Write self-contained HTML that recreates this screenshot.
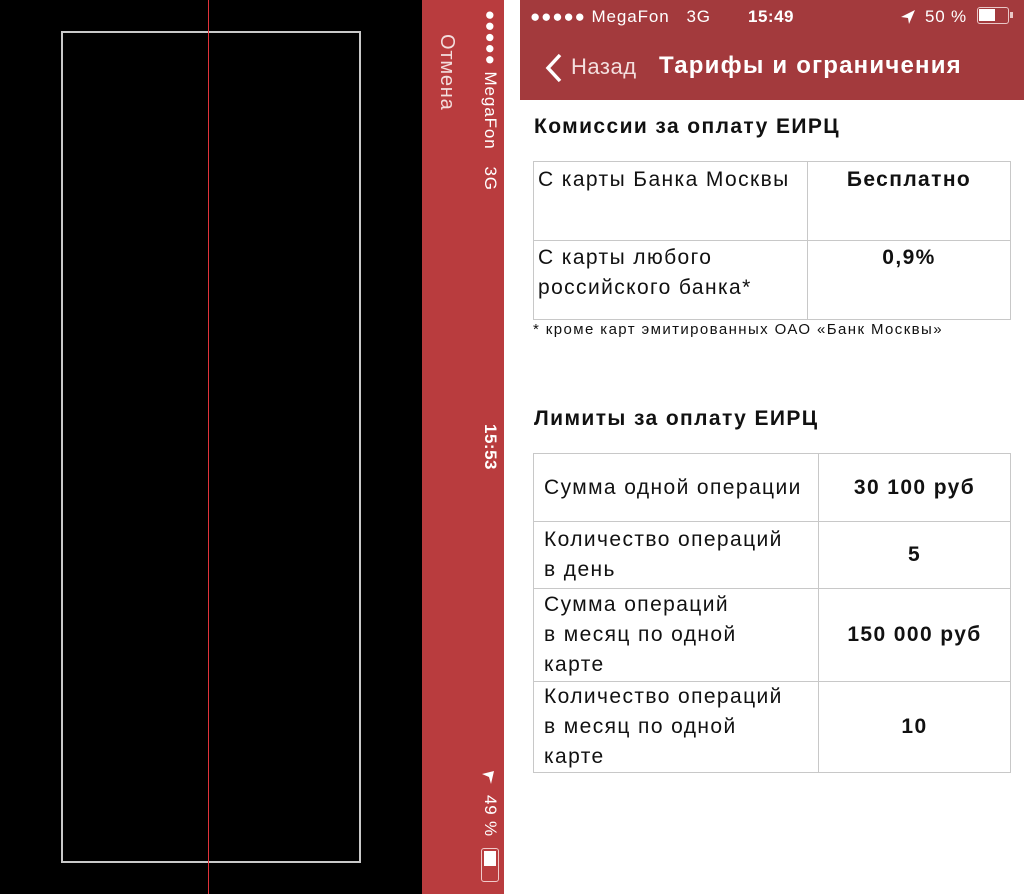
<!DOCTYPE html>
<html><head><meta charset="utf-8"><style>
*{margin:0;padding:0;box-sizing:border-box}
body{width:1024px;height:894px;position:relative;overflow:hidden;background:#fff;font-family:"Liberation Sans",sans-serif;color:#111;letter-spacing:1.4px}
.a{position:absolute}
.rot{position:absolute;transform-origin:0 0;transform:rotate(90deg);white-space:nowrap;color:#fff}
table{border-collapse:collapse;position:absolute;font-size:21px}
td{border:1px solid #c8c8c8;vertical-align:top;line-height:30px}
</style></head><body>
<div class="a" style="left:0;top:0;width:422px;height:894px;background:#000"></div>
<div class="a" style="left:61px;top:31px;width:300px;height:832px;border:2px solid #c9c9c9"></div>
<div class="a" style="left:208px;top:0;width:1px;height:894px;background:#e0333a"></div>
<div class="a" style="left:422px;top:0;width:82px;height:894px;background:#b93c3e"></div>
<div class="rot" style="left:500px;top:10px;font-size:17px;letter-spacing:0.9px">●●●●● MegaFon&nbsp;&nbsp;&nbsp;3G</div>
<div class="rot" style="left:458px;top:34px;font-size:20px;color:#f3dede;letter-spacing:0.8px">Отмена</div>
<div class="rot" style="left:500px;top:424px;font-size:17px;font-weight:bold;letter-spacing:0.5px">15:53</div>
<div class="rot" style="left:500px;top:795px;font-size:17px;letter-spacing:0.8px">49 %</div>
<svg class="a" style="left:480px;top:770px" width="16" height="16"><path d="M2 4 L14 1 L11 14 L9 7 Z" fill="#fff"/></svg>
<div class="a" style="left:481px;top:848px;width:18px;height:34px;border:1.5px solid #f0caca;border-radius:3px"><div style="height:15px;margin:2px;background:#fff"></div></div>

<div class="a" style="left:520px;top:0;width:504px;height:100px;background:#a33a3d"></div>
<div class="a" style="left:530px;top:7px;font-size:17px;color:#fff;letter-spacing:0.9px">●●●●● MegaFon&nbsp;&nbsp;&nbsp;3G</div>
<div class="a" style="left:748px;top:7px;font-size:17px;color:#fff;font-weight:bold;letter-spacing:0.5px">15:49</div>
<svg class="a" style="left:900px;top:9px" width="16" height="16"><path d="M1 8 L15 1 L9 15 L8 9 Z" fill="#fff"/></svg>
<div class="a" style="left:925px;top:7px;font-size:17px;color:#fff;letter-spacing:0.8px">50 %</div>
<div class="a" style="left:977px;top:7px;width:32px;height:17px;border:1.5px solid #e9c7c7;border-radius:3px"><div style="width:16px;height:12px;margin:1px;background:#fff"></div></div>
<div class="a" style="left:1010px;top:12px;width:3px;height:6px;background:#e9c7c7"></div>
<svg class="a" style="left:544px;top:52px" width="20" height="32"><path d="M16 3 L4 16 L16 29" stroke="#fff" stroke-width="3.5" fill="none"/></svg>
<div class="a" style="left:571px;top:54px;font-size:22px;color:#f3dede;letter-spacing:0.5px">Назад</div>
<div class="a" style="left:659px;top:52px;font-size:24px;color:#fff;font-weight:bold;letter-spacing:1.2px">Тарифы и ограничения</div>

<div class="a" style="left:534px;top:115px;font-size:21px;font-weight:bold">Комиссии за оплату ЕИРЦ</div>
<table style="left:533px;top:161px;width:478px">
<tr style="height:79px"><td style="width:274px;padding:3px 4px">С карты Банка Москвы</td><td style="text-align:center;font-weight:bold;padding:3px 4px">Бесплатно</td></tr>
<tr style="height:79px"><td style="padding:2px 4px">С карты любого<br>российского банка*</td><td style="text-align:center;font-weight:bold;padding:2px 4px">0,9%</td></tr>
</table>
<div class="a" style="left:533px;top:321px;font-size:15px">* кроме карт эмитированных ОАО «Банк Москвы»</div>

<div class="a" style="left:534px;top:407px;font-size:21px;font-weight:bold">Лимиты за оплату ЕИРЦ</div>
<table style="left:533px;top:453px;width:478px">
<tr style="height:68px"><td style="width:285px;padding:0 10px;vertical-align:middle">Сумма одной операции</td><td style="text-align:center;font-weight:bold;vertical-align:middle">30 100 руб</td></tr>
<tr style="height:67px"><td style="padding:0 10px;vertical-align:middle">Количество операций<br>в день</td><td style="text-align:center;font-weight:bold;vertical-align:middle">5</td></tr>
<tr style="height:93px"><td style="padding:0 10px;vertical-align:middle">Сумма операций<br>в месяц по одной<br>карте</td><td style="text-align:center;font-weight:bold;vertical-align:middle">150 000 руб</td></tr>
<tr style="height:91px"><td style="padding:0 10px;vertical-align:middle">Количество операций<br>в месяц по одной<br>карте</td><td style="text-align:center;font-weight:bold;vertical-align:middle">10</td></tr>
</table>
</body></html>
